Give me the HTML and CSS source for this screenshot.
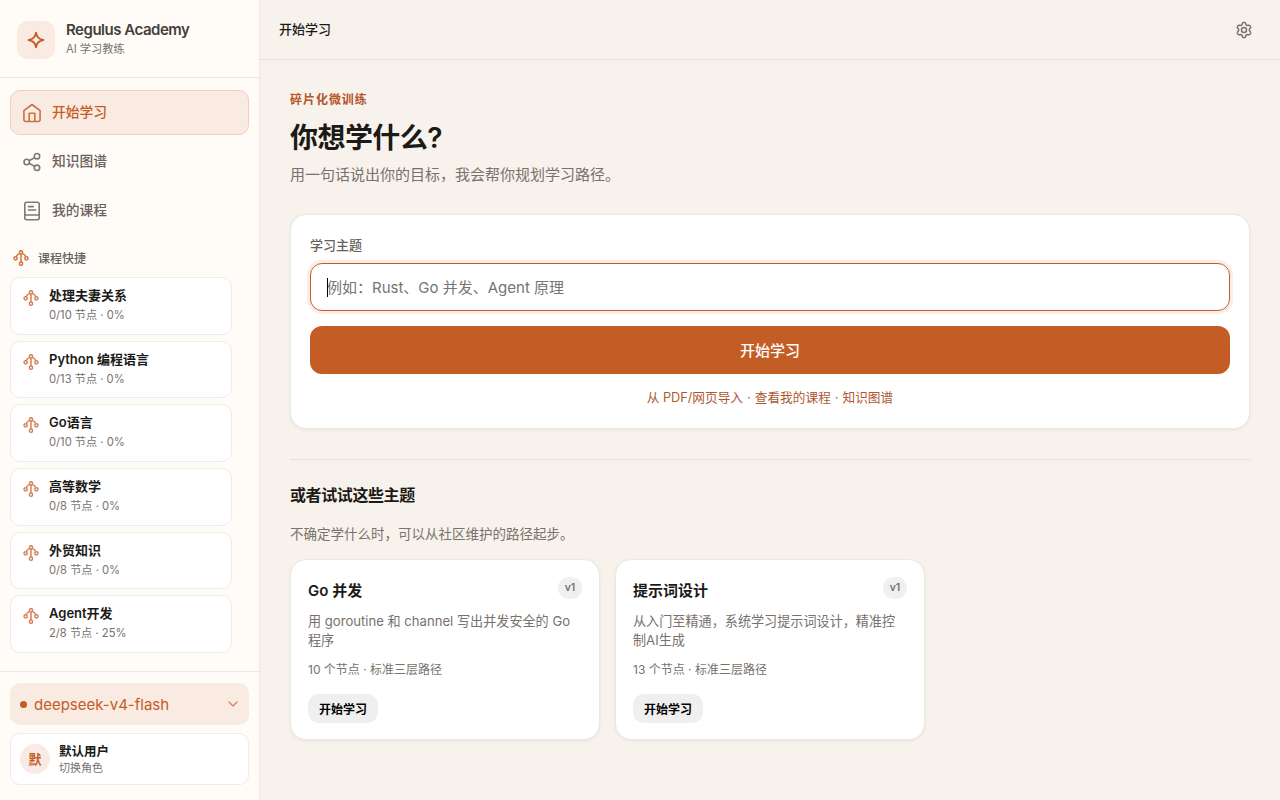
FILE: index.html
```html
<!DOCTYPE html>
<html lang="zh-CN">
<head>
<meta charset="utf-8">
<title>Regulus Academy</title>
<link rel="stylesheet" href="styles.css">
</head>
<body>
<svg width="0" height="0" class="defs">
  <symbol id="tree" viewBox="0 0 16 16">
    <g fill="none" stroke="currentColor" stroke-width="1.5">
      <circle cx="8" cy="2.3" r="1.6"/><circle cx="2.6" cy="8.3" r="1.6"/><circle cx="13.4" cy="8.300" r="1.6"/><circle cx="8" cy="13.7" r="1.6"/>
      <path d="M8 3.900v8.200M6.800 3.400C5 4.200 3.600 5.200 3.200 6.800M9.200 3.400c1.800.8 3.200 1.800 3.600 3.400"/>
    </g>
  </symbol>
</svg>
<div class="app">
  <aside class="sidebar">
    <div class="brand">
      <div class="brand-mark"><svg width="18" height="18" viewBox="0 0 18 18" fill="none" stroke="currentColor" stroke-width="1.8" stroke-linejoin="round"><path d="M9 1.600Q9.900 8.100 16.400 9Q9.900 9.900 9 16.400Q8.100 9.900 1.600 9Q8.100 8.100 9 1.600Z"/></svg></div>
      <div>
        <div class="brand-name">Regulus Academy</div>
        <div class="brand-sub">AI 学习教练</div>
      </div>
    </div>
    <nav class="nav">
      <a class="nav-item active"><svg width="20" height="20" viewBox="0 0 20 20" fill="none" stroke="currentColor" stroke-width="1.600" stroke-linejoin="round"><path d="M1.900 7.600 10 1.500l8.100 6.100V16.500a2 2 0 0 1-2 2H3.900a2 2 0 0 1-2-2Z"/><path d="M7.200 18.500v-8.300h5.600v8.300"/></svg><span>开始学习</span></a>
      <a class="nav-item"><svg width="20" height="20" viewBox="0 0 20 20" fill="none" stroke="currentColor" stroke-width="1.600"><circle cx="4.700" cy="10" r="2.700"/><circle cx="15" cy="4.200" r="2.700"/><circle cx="15" cy="15.800" r="2.700"/><path d="m7.100 8.700 5.500-3.100M7.100 11.300l5.500 3.100"/></svg><span>知识图谱</span></a>
      <a class="nav-item"><svg width="20" height="20" viewBox="0 0 20 20" fill="none" stroke="currentColor" stroke-width="1.600" stroke-linecap="round"><rect x="2.800" y="1.300" width="14.400" height="17.400" rx="2"/><path d="M3 14h14M6.500 5.600h4.800M6.500 9h7.200"/></svg><span>我的课程</span></a>
    </nav>
    <section class="shortcuts">
      <h2 class="shortcuts-title"><svg width="16" height="16"><use href="#tree"/></svg>课程快捷</h2>
      <div class="course-list">
        <a class="course"><svg width="16" height="16"><use href="#tree"/></svg><div><div class="course-name">处理夫妻关系</div><div class="course-meta">0/10 节点 · 0%</div></div></a>
        <a class="course"><svg width="16" height="16"><use href="#tree"/></svg><div><div class="course-name">Python 编程语言</div><div class="course-meta">0/13 节点 · 0%</div></div></a>
        <a class="course"><svg width="16" height="16"><use href="#tree"/></svg><div><div class="course-name">Go语言</div><div class="course-meta">0/10 节点 · 0%</div></div></a>
        <a class="course"><svg width="16" height="16"><use href="#tree"/></svg><div><div class="course-name">高等数学</div><div class="course-meta">0/8 节点 · 0%</div></div></a>
        <a class="course"><svg width="16" height="16"><use href="#tree"/></svg><div><div class="course-name">外贸知识</div><div class="course-meta">0/8 节点 · 0%</div></div></a>
        <a class="course"><svg width="16" height="16"><use href="#tree"/></svg><div><div class="course-name">Agent开发</div><div class="course-meta">2/8 节点 · 25%</div></div></a>
      </div>
    </section>
    <footer class="side-foot">
      <div class="model"><i class="dot"></i><span>deepseek-v4-flash</span><svg width="12" height="12" viewBox="0 0 12 12" fill="none" stroke="currentColor" stroke-width="1.2" stroke-linecap="round" stroke-linejoin="round"><path d="m2 4 4 4 4-4"/></svg></div>
      <div class="user"><div class="avatar">默</div><div><div class="user-name">默认用户</div><div class="user-sub">切换角色</div></div></div>
    </footer>
  </aside>
  <div class="page">
    <header class="topbar"><span>开始学习</span>
      <svg width="18" height="18" viewBox="0 0 24 24" fill="none" stroke="currentColor" stroke-width="2" stroke-linejoin="round"><path d="M9.600 3.900c.2-.7.6-1.900 1.200-1.900h2.400c.6 0 1 1.200 1.200 1.900l.3 1.300 1.500.9 1.500-.4c.8-.2 1.700-.3 2.100.4l1.200 2.100c.3.6-.3 1.200-.8 1.700l-1.100 1.100v2l1.100 1.100c.5.5 1.100 1.100.8 1.700l-1.200 2.100c-.4.7-1.300.6-2.100.4l-1.500-.4-1.500.9-.3 1.300c-.2.7-.6 1.900-1.200 1.900h-2.400c-.6 0-1-1.200-1.200-1.900l-.3-1.300-1.500-.9-1.500.4c-.8.2-1.700.3-2.100-.4L3 15.800c-.3-.6.3-1.200.8-1.700L4.900 13v-2L3.800 9.900C3.300 9.400 2.700 8.800 3 8.200l1.200-2.100c.4-.7 1.300-.6 2.100-.4l1.500.4 1.500-.9Z"/><circle cx="12" cy="12" r="3.400"/></svg>
    </header>
    <main class="content">
      <div class="eyebrow">碎片化微训练</div>
      <h1 class="title">你想学什么?</h1>
      <p class="lead">用一句话说出你的目标，我会帮你规划学习路径。</p>
      <section class="panel">
        <label class="label">学习主题</label>
        <div class="field"><i class="caret"></i>例如：Rust、Go 并发、Agent 原理</div>
        <button class="primary">开始学习</button>
        <div class="links"><a>从 PDF/网页导入</a><span>·</span><a>查看我的课程</a><span>·</span><a>知识图谱</a></div>
      </section>
      <section class="suggest">
        <h2 class="suggest-title">或者试试这些主题</h2>
        <p class="suggest-sub">不确定学什么时，可以从社区维护的路径起步。</p>
        <div class="grid">
          <article class="card">
            <div class="card-head"><h3>Go 并发</h3><span class="tag">v1</span></div>
            <p class="desc">用 goroutine 和 channel 写出并发安全的 Go 程序</p>
            <p class="meta">10 个节点 · 标准三层路径</p>
            <button class="start">开始学习</button>
          </article>
          <article class="card">
            <div class="card-head"><h3>提示词设计</h3><span class="tag">v1</span></div>
            <p class="desc">从入门至精通，系统学习提示词设计，精准控制AI生成</p>
            <p class="meta">13 个节点 · 标准三层路径</p>
            <button class="start">开始学习</button>
          </article>
        </div>
      </section>
    </main>
  </div>
</div>
</body>
</html>
```
FILE: styles.css
```css
* { box-sizing: border-box; }
body, h1, h2, h3, p { margin: 0; }
body {
  height: 800px;
  overflow: hidden;
  font-family: Inter, "Noto Sans CJK SC", sans-serif;
  font-size: 15px;
  color: #1c1a17;
  background: #f7f2eb;
}
button { border: 0; font-family: inherit; }
svg { flex: none; display: block; }
.defs { display: none; }
.app { display: flex; height: 800px; }

.sidebar {
  width: 260px;
  flex: none;
  display: flex;
  flex-direction: column;
  background: #fffcf7;
  border-right: 1px solid #ebe8e4;
}
.brand {
  display: flex;
  align-items: center;
  gap: 11px;
  height: 78px;
  padding: 2px 17px 0;
  border-bottom: 1px solid #ebe8e4;
}
.brand-mark {
  display: grid;
  place-items: center;
  width: 38px;
  height: 38px;
  border-radius: 10px;
  background: #f9eae2;
  color: #c45c26;
}
.brand-name { margin-top: -1px; font-family: Inter, sans-serif; font-size: 15px; font-weight: 600; line-height: 19px; letter-spacing: -0.48px; color: #44403c; }
.brand-sub { margin-top: 1px; font-size: 11.2px; line-height: 18px; color: #78716c; }
.nav { display: flex; flex-direction: column; gap: 4px; padding: 12px 10px 0; }
.nav-item {
  display: flex;
  align-items: center;
  gap: 10px;
  height: 45px;
  padding: 0 11px;
  border: 1px solid transparent;
  border-radius: 10px;
  font-size: 13.75px;
  font-weight: 500;
  color: #68625d;
}
.nav-item span { margin-top: -3px; }
.nav-item svg { opacity: .85; }
.nav-item.active { background: #f9eae2; border-color: #f0cfbd; color: #c45c26; }
.shortcuts { padding: 14px 10px 0; }
.shortcuts-title { display: flex; align-items: center; gap: 9px; height: 20px; padding-left: 3px; font-size: 12px; font-weight: 500; color: #68625d; }
.shortcuts-title svg { margin-top: 1px; color: #d27543; }
.course-list { display: flex; flex-direction: column; gap: 6px; padding-top: 10px; width: 222px; }
.course { display: flex; gap: 10px; height: 57.67px; padding: 7px 12px; border: 1px solid #eeebe9; border-radius: 10px; background: #fff; }
.course svg { margin-top: 5px; color: #d98058; }
.course-name { font-size: 13px; font-weight: 600; line-height: 20px; }
.course-meta { font-size: 11.2px; line-height: 20px; color: #78716c; }
.side-foot { margin-top: auto; height: 129px; padding: 11px 10px 0; border-top: 1px solid #ebe8e4; display: flex; flex-direction: column; gap: 8px; }
.model { display: flex; align-items: center; gap: 7px; height: 42px; padding: 0 10px; border-radius: 10px; background: #f9eae2; color: #c45c26; font-size: 15px; }
.model svg { margin-left: auto; opacity: .7; }
.dot { width: 7px; height: 7px; border-radius: 50%; background: #c45c26; }
.user { display: flex; align-items: center; gap: 9px; height: 52px; padding: 2px 9px 0; border: 1px solid #eeebe9; border-radius: 10px; background: #fff; }
.avatar { display: grid; place-items: center; width: 30px; height: 30px; margin-top: -2px; padding-bottom: 2px; border-radius: 50%; background: #f9eae6; color: #c45c26; font-size: 13px; font-weight: 600; }
.user-name { font-size: 12.5px; font-weight: 600; line-height: 17px; }
.user-sub { font-size: 11px; line-height: 17px; color: #78716c; }

.page { flex: 1; display: flex; flex-direction: column; }
.topbar { display: flex; align-items: center; justify-content: space-between; height: 60px; padding: 0 27px 0 19px; border-bottom: 1px solid #e6e1db; font-size: 13px; font-weight: 500; }
.topbar span { margin-top: -2px; }
.topbar svg { color: #78716c; }
.content { padding: 30px; }
.eyebrow { font-size: 12px; font-weight: 600; line-height: 20px; letter-spacing: .08em; color: #b4552a; }
.title { margin-top: 9px; font-size: 28px; font-weight: 600; line-height: 38px; letter-spacing: -0.02em; }
.lead { margin-top: 6px; line-height: 24px; color: #78716c; }
.panel { margin-top: 27px; height: 215px; padding: 20px 19px; border: 1px solid #ebe9e6; border-radius: 16px; background: #fff; box-shadow: 0 1px 3px rgba(60, 40, 20, .08); }
.label { display: block; font-size: 13px; font-weight: 500; line-height: 20px; color: #68625d; }
.field { position: relative; display: flex; align-items: center; height: 48px; margin-top: 8px; padding: 0 16px 2px; border: 1px solid #c45c26; border-radius: 12px; box-shadow: 0 0 0 3px #f9ede7; color: #757575; }
.caret { position: absolute; left: 16px; top: 14px; width: 1px; height: 19px; background: #000; }
.primary { display: block; width: 100%; height: 48px; margin-top: 15px; padding: 0 0 2px; border-radius: 12px; background: #c45c26; color: #fff; font-size: 15px; font-weight: 500; }
.links { display: flex; justify-content: center; gap: 4px; margin-top: 14px; font-size: 12.7px; line-height: 20px; color: #78716c; }
.links a { color: #ad5a32; }
.suggest { margin-top: 29px; padding-top: 23px; border-top: 1px solid #e6e1db; }
.panel + .suggest { margin-top: 30px; }
.suggest-title { font-size: 16px; font-weight: 600; line-height: 24px; letter-spacing: -0.025em; }
.suggest-sub { margin-top: 17px; font-size: 13.5px; line-height: 20px; color: #78716c; }
.grid { display: grid; grid-template-columns: 310px 310px; gap: 15px; margin-top: 15px; }
.card { height: 181px; padding: 17px; border: 1px solid #ebe9e6; border-radius: 16px; background: #fff; box-shadow: 0 1px 3px rgba(60, 40, 20, .08); }
.card-head { display: flex; justify-content: space-between; }
.card-head h3 { margin-top: 2px; font-size: 15px; font-weight: 600; line-height: 24px; }
.tag { width: 24px; height: 22px; border-radius: 11px; background: #f0f0f0; color: #78716c; font-size: 10.5px; font-weight: 600; line-height: 21px; text-align: center; }
.desc { margin-top: 9px; padding-right: 4px; font-size: 13.12px; line-height: 19px; color: #78716c; }
.meta { margin-top: 10px; font-size: 12px; line-height: 20px; color: #78716c; }
.start { display: block; width: 70px; height: 29px; margin-top: 14px; padding: 0; border-radius: 11px; background: #efefef; color: #000; font-size: 12px; font-weight: 600; }
```
